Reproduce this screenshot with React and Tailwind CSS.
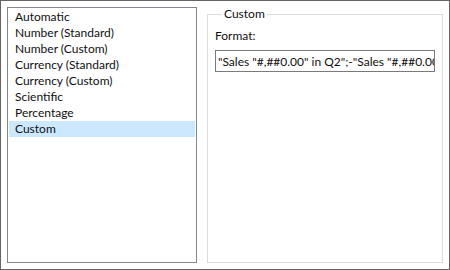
import React, { useState } from 'react';

const formats = [
    'Automatic',
    'Number (Standard)',
    'Number (Custom)',
    'Currency (Standard)',
    'Currency (Custom)',
    'Scientific',
    'Percentage',
    'Custom',
];

const App = () => {
    const [selected, setSelected] = useState('Custom');
    const [code, setCode] = useState('"Sales "#,##0.00" in Q2";-"Sales "#,##0.00" in Q2"');

    return (
        <div className="w-[450px] h-[270px] bg-white border border-[#646464] p-[6px] flex gap-[10px] text-[12px] text-[#101010]" style={{ fontFamily: 'Lato, "Noto Sans", sans-serif' }}>
            {/* format list */}
            <div className="w-[190px] h-[256px] shrink-0 border border-[#828790] p-px">
                {formats.map((name) => (
                    <div
                        key={name}
                        onClick={() => setSelected(name)}
                        className={`h-[16px] leading-[16px] pl-[6px] cursor-default ${selected === name ? 'bg-[#cce8ff]' : ''}`}
                    >
                        {name}
                    </div>
                ))}
            </div>

            {/* settings group */}
            <fieldset className="w-[236px] min-w-0 h-[256px] shrink-0 border border-[#dcdcdc] px-[7px]">
                <legend className="ml-[7px] px-[2px] leading-[14px]">{selected}</legend>
                <label htmlFor="fmt" className="block mt-[7px] leading-[16px]">Format:</label>
                <input
                    id="fmt"
                    value={code}
                    onChange={(e) => setCode(e.target.value)}
                    className="mt-[6px] block w-full h-[22px] border border-[#7a7a7a] pl-[2px] pr-0 outline-none"
                />
            </fieldset>
        </div>
    );
};

export default App;
